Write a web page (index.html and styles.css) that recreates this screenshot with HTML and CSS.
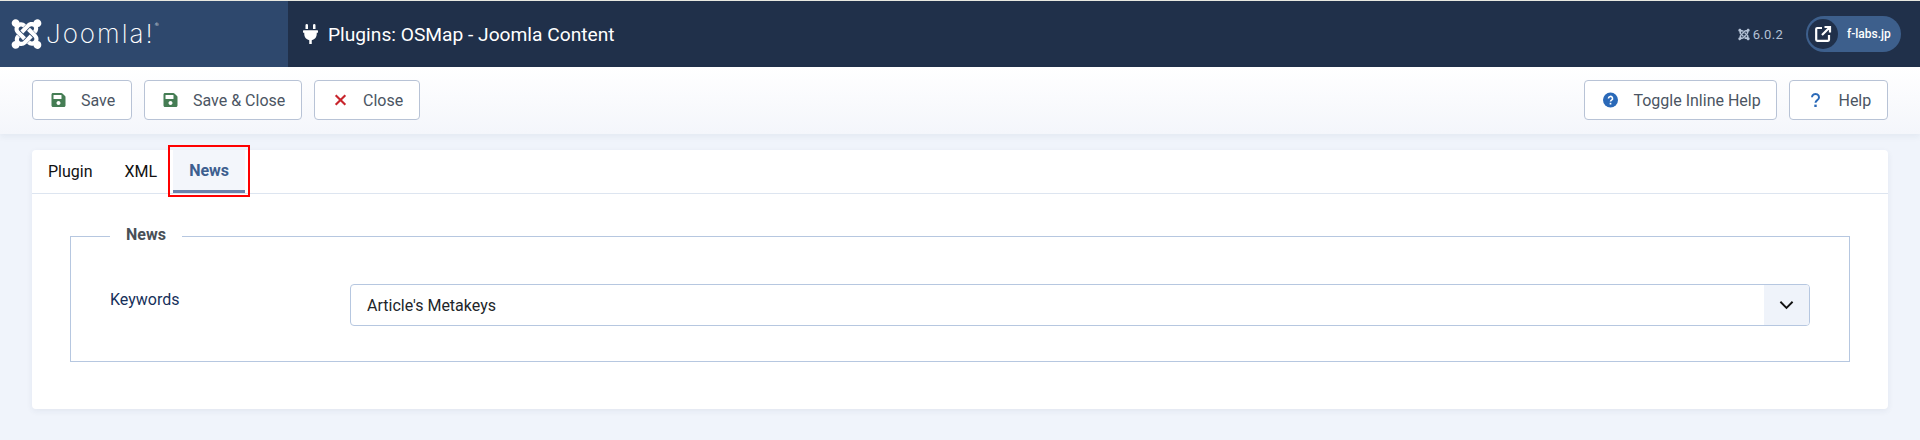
FILE: index.html
```html
<!DOCTYPE html>
<html lang="en">
<head>
    <meta charset="UTF-8">
    <meta name="viewport" content="width=device-width, initial-scale=1.0">
    <title>Plugins: OSMap - Joomla Content</title>
    <link rel="stylesheet" href="styles.css">
</head>
<body>
    <svg class="icon-defs" width="0" height="0" aria-hidden="true">
        <defs>
            <path id="joomla-arm" d="M.6 92.1C.6 58.8 27.4 32 60.4 32c30 0 54.5 21.9 59.2 50.2 32.6-7.6 67.1.6 96.5 30l-44.3 44.3c-20.5-20.5-42.6-16.3-55.4-3.5-14.3 14.3-14.3 37.9 0 52.2l99.5 99.5-44 44.3c-87.7-87.2-49.7-49.7-99.8-99.7-26.8-26.5-35-64.8-24.8-98.9C20.4 144.6.6 120.7.6 92.1z"/>
            <symbol id="joomla" viewBox="0 0 448 512">
                <use href="#joomla-arm"/>
                <use href="#joomla-arm" transform="rotate(90 224 256)"/>
                <use href="#joomla-arm" transform="rotate(180 224 256)"/>
                <use href="#joomla-arm" transform="rotate(270 224 256)"/>
            </symbol>
            <symbol id="save" viewBox="0 0 448 512">
                <path d="M433.941 129.941l-83.882-83.882A48 48 0 0 0 316.118 32H48C21.49 32 0 53.49 0 80v352c0 26.51 21.49 48 48 48h352c26.51 0 48-21.49 48-48V163.882a48 48 0 0 0-14.059-33.941zM224 416c-35.346 0-64-28.654-64-64 0-35.346 28.654-64 64-64s64 28.654 64 64c0 35.346-28.654 64-64 64zm96-304.52V212c0 6.627-5.373 12-12 12H76c-6.627 0-12-5.373-12-12V108c0-6.627 5.373-12 12-12h228.52c3.183 0 6.235 1.264 8.485 3.515l3.48 3.48A11.996 11.996 0 0 1 320 111.48z"/>
            </symbol>
        </defs>
    </svg>

    <header class="site-header">
        <div class="brand">
            <svg class="brand-icon"><use href="#joomla"/></svg>
            <span class="brand-name">Joomla!<sup>®</sup></span>
        </div>
        <div class="header-main">
            <h1 class="page-title">
                <svg class="plug-icon" viewBox="0 0 384 512"><path d="M320,32a32,32,0,0,0-64,0v96h64Zm48,128H16A16,16,0,0,0,0,176v32a16,16,0,0,0,16,16H32v32A160.07,160.07,0,0,0,160,412.8V512h64V412.8A160.07,160.07,0,0,0,352,256V224h16a16,16,0,0,0,16-16V176A16,16,0,0,0,368,160ZM128,32a32,32,0,0,0-64,0v96h64Z"/></svg>
                Plugins: OSMap - Joomla Content
            </h1>
            <div class="header-right">
                <span class="version">
                    <svg class="version-icon"><use href="#joomla"/></svg>
                    6.0.2
                </span>
                <a class="site-pill" href="#">
                    <span class="site-pill-icon">
                        <svg viewBox="0 0 18 18"><path d="M8 3H3.2a1 1 0 0 0-1 1v10.800a1 1 0 0 0 1 1H14a1 1 0 0 0 1-1V10M8 10l7.500-7.500M10.500 2H16v5.500" fill="none" stroke="#fff" stroke-width="2.200"/></svg>
                    </span>
                    f-labs.jp
                </a>
            </div>
        </div>
    </header>

    <div class="toolbar">
        <div class="toolbar-group">
            <button class="btn" type="button"><svg class="btn-icon green"><use href="#save"/></svg>Save</button>
            <button class="btn" type="button"><svg class="btn-icon green"><use href="#save"/></svg>Save &amp; Close</button>
            <button class="btn" type="button">
                <svg class="btn-icon" viewBox="0 0 14 14"><path d="M2.500 2.500l9 9M11.500 2.500l-9 9" fill="none" stroke="#c8252c" stroke-width="2"/></svg>Close
            </button>
        </div>
        <div class="toolbar-group">
            <button class="btn" type="button">
                <svg class="btn-icon" viewBox="0 0 16 16"><circle cx="8" cy="8" r="8" fill="#2a69b8"/><path d="M5.800 6.300a2.200 2.100 0 1 1 3.300 1.800c-.8.500-1.100.8-1.100 1.600" fill="none" stroke="#fff" stroke-width="1.700"/><rect x="7.100" y="11" width="1.800" height="1.800" fill="#fff"/></svg>Toggle Inline Help
            </button>
            <button class="btn" type="button">
                <svg class="btn-icon" viewBox="0 0 14 16"><path d="M3.500 5.200a3.500 3.300 0 1 1 5.300 2.900C7.600 8.900 7 9.500 7 10.800" fill="none" stroke="#2a69b8" stroke-width="2"/><rect x="5.800" y="12.600" width="2.400" height="2.400" fill="#2a69b8"/></svg>Help
            </button>
        </div>
    </div>

    <main class="card">
        <div class="tabs">
            <button class="tab" type="button">Plugin</button>
            <button class="tab" type="button">XML</button>
            <button class="tab active" type="button">News<span class="highlight"></span></button>
        </div>
        <div class="tab-panel">
            <fieldset class="options">
                <legend>News</legend>
                <div class="control-group">
                    <label for="keywords">Keywords</label>
                    <div class="select-wrapper">
                        <select id="keywords" name="keywords">
                            <option>Article's Metakeys</option>
                        </select>
                        <span class="select-arrow">
                            <svg viewBox="0 0 16 10"><path d="M1.500 1.500L8 8l6.500-6.500" fill="none" stroke="#111" stroke-width="2"/></svg>
                        </span>
                    </div>
                </div>
            </fieldset>
        </div>
    </main>
</body>
</html>
```

FILE: styles.css
```css
* {
    box-sizing: border-box;
}

body {
    margin: 0;
    height: 440px;
    overflow: hidden;
    font-family: Roboto, "Liberation Sans", sans-serif;
    font-size: 16px;
    background-color: #f0f4fb;
    border-top: 1px solid #e8e8e0;
}

.icon-defs {
    display: block;
    height: 0;
}

/* Header */
.site-header {
    display: flex;
    height: 66px;
    background-color: #20304a;
    color: white;
}

.brand {
    display: flex;
    align-items: center;
    width: 288px;
    padding-left: 10px;
    background-color: #2e486d;
}

.brand-icon {
    width: 33px;
    height: 34px;
    fill: white;
}

.brand-name {
    margin-left: 3px;
    font-family: Inter, sans-serif;
    font-weight: 200;
    font-size: 26px;
    line-height: 1;
    letter-spacing: 2px;
}

.brand-name sup {
    font-size: 6px;
    vertical-align: 16px;
    line-height: 0;
}

.header-main {
    flex: 1;
    display: flex;
    align-items: center;
    justify-content: space-between;
    padding: 0 19px 0 15px;
}

.page-title {
    display: flex;
    align-items: center;
    gap: 10px;
    margin: 0;
    font-size: 19.2px;
    font-weight: 400;
}

.plug-icon {
    width: 15px;
    height: 20px;
    fill: white;
}

.header-right {
    display: flex;
    align-items: center;
    gap: 23px;
}

.version {
    display: flex;
    align-items: center;
    gap: 3px;
    font-size: 13px;
    letter-spacing: 0.3px;
    color: #b4c2d6;
}

.version-icon {
    width: 12px;
    height: 13px;
    fill: #b4c2d6;
}

.site-pill {
    display: flex;
    align-items: center;
    gap: 9px;
    height: 36px;
    width: 95px;
    padding-left: 2px;
    border-radius: 18px;
    background-color: #3d5f8c;
    color: white;
    font-size: 12px;
    font-weight: 500;
    text-decoration: none;
}

.site-pill-icon {
    display: flex;
    align-items: center;
    justify-content: center;
    width: 30px;
    height: 30px;
    border-radius: 50%;
    background-color: #20304a;
}

.site-pill-icon svg {
    width: 18px;
    height: 18px;
}

/* Toolbar */
.toolbar {
    display: flex;
    justify-content: space-between;
    height: 67px;
    padding: 13px 32px 0;
    background: linear-gradient(#ffffff, #f4f6fb);
    box-shadow: 0 3px 6px rgba(40, 60, 100, 0.06);
}

.toolbar-group {
    display: flex;
    gap: 12px;
}

.btn {
    display: flex;
    align-items: center;
    height: 40px;
    padding: 0 15.75px 0 18px;
    border: 1px solid #b8c3d6;
    border-radius: 4px;
    background-color: white;
    color: #4b5563;
    font-family: inherit;
    font-size: 16px;
    cursor: pointer;
}

.btn-icon {
    width: 15px;
    height: 16px;
    margin-right: 15px;
}

.btn-icon.green {
    fill: #457d54;
}

/* Card and tabs */
.card {
    position: relative;
    margin: 16px 32px 0;
    height: 259px;
    border-radius: 4px;
    background-color: white;
    box-shadow: 0 2px 6px rgba(40, 60, 100, 0.07);
}

.tabs {
    display: flex;
    height: 44px;
    border-bottom: 1px solid #dde5f0;
}

.tab {
    position: relative;
    padding: 0 16px;
    border: none;
    background: none;
    color: #111;
    font-family: inherit;
    font-size: 16px;
    cursor: pointer;
}

.tab.active {
    background-color: #f3f6fb;
    color: #3d5f8f;
    font-weight: 700;
    border-bottom: 3px solid #6a82ab;
}

.highlight {
    position: absolute;
    top: -5px;
    left: -5px;
    right: -5px;
    bottom: -7px;
    border: 2px solid #ff0000;
}

.tab-panel {
    padding: 30px 38px 0;
}

/* Fieldset */
.options {
    margin: 0;
    padding: 36px 39px 35px;
    min-width: 0;
    border: 1px solid #b6c7e0;
}

.options legend {
    padding: 0 16px 3px;
    color: #495057;
    font-weight: 700;
    font-size: 16px;
    line-height: 21px;
}

.control-group {
    display: flex;
}

.control-group label {
    width: 240px;
    padding-top: 4px;
    color: #16305a;
    line-height: 24px;
}

.select-wrapper {
    position: relative;
    flex: 1;
}

.select-wrapper select {
    display: block;
    width: 100%;
    height: 42px;
    padding: 0 50px 0 16px;
    border: 1px solid #b6c7e0;
    border-radius: 4px;
    background-color: white;
    color: #212529;
    font-family: inherit;
    font-size: 16px;
    appearance: none;
}

.select-arrow {
    position: absolute;
    top: 1px;
    right: 1px;
    bottom: 1px;
    width: 45px;
    display: flex;
    align-items: center;
    justify-content: center;
    border-radius: 0 3px 3px 0;
    background-color: #eff3fa;
    pointer-events: none;
}

.select-arrow svg {
    width: 15px;
    height: 10px;
}
```
